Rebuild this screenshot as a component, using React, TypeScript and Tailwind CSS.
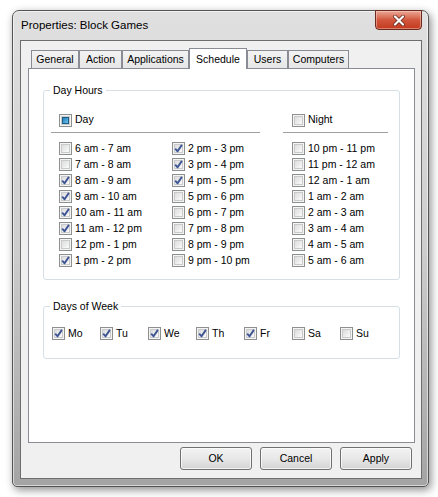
import React from "react";

type CheckState = "on" | "off" | "mixed";

function CheckBox({ state }: { state: CheckState }) {
  return (
    <span className="flex h-[13px] w-[13px] shrink-0 items-center justify-center border border-[#8e8f8f] bg-[#f4f4f4]">
      <span className="relative flex h-[9px] w-[9px] items-center justify-center border border-[#c9cacb] bg-gradient-to-br from-[#dcdcdd] to-[#fbfbfb]">
        {state === "on" && (
          <svg viewBox="0 0 11 11" className="absolute left-[-2px] top-[-2px] h-[11px] w-[11px]">
            <path d="M2.2 5.6 L4.6 8.3 L8.9 1.9" fill="none" stroke="#3d5593" strokeWidth="1.9" strokeLinejoin="round" />
          </svg>
        )}
        {state === "mixed" && (
          <span className="h-[7px] w-[7px] border border-[#1e5f8a] bg-gradient-to-br from-[#1f7fb8] to-[#6cc2ec]" />
        )}
      </span>
    </span>
  );
}

function Check({ label, state }: { label: string; state: CheckState }) {
  return (
    <div className="flex h-[16px] items-center gap-[3px] whitespace-nowrap">
      <CheckBox state={state} />
      <span className="leading-[13px]">{label}</span>
    </div>
  );
}

function Group({ title, className, children }: { title: string; className: string; children: React.ReactNode }) {
  return (
    <div className={`relative rounded-[3px] border border-[#d5dfe5] ${className}`}>
      <span className="absolute left-[6px] top-[-8px] bg-white px-[3px] leading-[14px]">{title}</span>
      {children}
    </div>
  );
}

const col1: [string, CheckState][] = [
  ["6 am - 7 am", "off"],
  ["7 am - 8 am", "off"],
  ["8 am - 9 am", "on"],
  ["9 am - 10 am", "on"],
  ["10 am - 11 am", "on"],
  ["11 am - 12 pm", "on"],
  ["12 pm - 1 pm", "off"],
  ["1 pm - 2 pm", "on"],
];

const col2: [string, CheckState][] = [
  ["2 pm - 3 pm", "on"],
  ["3 pm - 4 pm", "on"],
  ["4 pm - 5 pm", "on"],
  ["5 pm - 6 pm", "off"],
  ["6 pm - 7 pm", "off"],
  ["7 pm - 8 pm", "off"],
  ["8 pm - 9 pm", "off"],
  ["9 pm - 10 pm", "off"],
];

const night: string[] = [
  "10 pm - 11 pm",
  "11 pm - 12 am",
  "12 am - 1 am",
  "1 am - 2 am",
  "2 am - 3 am",
  "3 am - 4 am",
  "4 am - 5 am",
  "5 am - 6 am",
];

const days: [string, CheckState][] = [
  ["Mo", "on"],
  ["Tu", "on"],
  ["We", "on"],
  ["Th", "on"],
  ["Fr", "on"],
  ["Sa", "off"],
  ["Su", "off"],
];

const tabs: { name: string; w: string; active?: boolean }[] = [
  { name: "General", w: "w-[48px]" },
  { name: "Action", w: "w-[43px]" },
  { name: "Applications", w: "w-[67px]" },
  { name: "Schedule", w: "w-[58px]", active: true },
  { name: "Users", w: "w-[41px]" },
  { name: "Computers", w: "w-[61px]" },
];

function Button({ label }: { label: string }) {
  return (
    <button className="flex h-[23px] w-[72px] items-center justify-center rounded-[3px] border border-[#707070] bg-gradient-to-b from-[#f2f2f2] via-[#e8e8e8] to-[#d3d3d3] text-[10.5px] text-black shadow-[inset_0_0_0_1px_rgba(255,255,255,0.7)]">
      {label}
    </button>
  );
}

export default function App() {
  return (
    <div className="h-[497px] w-[438px] bg-white pl-[12px] pt-[10px] font-['Liberation_Sans',Arial,sans-serif] text-[10.5px] text-black">
      <div className="flex h-[477px] w-[417px] flex-col rounded-t-[7px] rounded-b-[5px] border border-[#555] bg-gradient-to-b from-[#e0e0e0] via-[#cdcdcd] to-[#a4a4a4] shadow-[inset_0_0_0_1px_rgba(255,255,255,0.55),2px_3px_9px_rgba(0,0,0,0.45)]">
        {/* title bar */}
        <div className="flex h-[29px] items-start justify-between pl-[8px] pr-[6px]">
          <span className="pt-[7px] text-[11.5px] leading-[14px]">Properties: Block Games</span>
          <div className="mt-[-1px] flex h-[20px] w-[47px] items-center justify-center rounded-b-[4px] border border-[#6b2a1e] bg-gradient-to-b from-[#e9a797] via-[#d2563c] to-[#c2391d] shadow-[inset_0_0_0_1px_rgba(255,220,210,0.45)]">
            <svg viewBox="0 0 14 11" className="h-[11px] w-[14px]">
              <path d="M3 1.5 L11 9.5 M11 1.5 L3 9.5" stroke="#5a2418" strokeWidth="3.6" strokeLinecap="round" />
              <path d="M3 1.5 L11 9.5 M11 1.5 L3 9.5" stroke="#ffffff" strokeWidth="2.2" strokeLinecap="round" />
            </svg>
          </div>
        </div>

        {/* client area */}
        <div className="ml-[7px] mr-[6px] flex h-[439px] flex-col border border-[#6e6e6e] bg-[#f0f0f0] pt-[7px]">
          <div className="ml-[7px] mr-[6px] flex flex-col">
            <div className="flex h-[20px] items-end pl-[3px]">
              {tabs.map((t) =>
                t.active ? (
                  <div
                    key={t.name}
                    className={`relative z-10 -mb-px flex h-[21px] ${t.w} items-start justify-center border border-b-0 border-[#898c95] bg-white pt-[3px]`}
                  >
                    {t.name}
                  </div>
                ) : (
                  <div
                    key={t.name}
                    className={`flex h-[18px] ${t.w} items-center justify-center border border-b-0 border-[#898c95] bg-gradient-to-b from-[#f3f3f3] to-[#e6e6e6] pt-[1px]`}
                  >
                    {t.name}
                  </div>
                )
              )}
            </div>

            {/* tab panel */}
            <div className="flex h-[375px] flex-col border border-[#898c95] bg-white px-[14px] pt-[21px]">
              <Group title="Day Hours" className="h-[190px]">
                <div className="flex pl-[7px]">
                  <div className="w-[209px]">
                    <div className="mt-[22px] flex h-[14px] items-center gap-[3px] pl-[8px]">
                      <CheckBox state="mixed" />
                      <span>Day</span>
                    </div>
                    <div className="mt-[5px] h-px bg-[#a0a0a0]" />
                    <div className="mt-[7px] flex pl-[8px]">
                      <div className="w-[113px]">
                        {col1.map(([l, s]) => (
                          <Check key={l} label={l} state={s} />
                        ))}
                      </div>
                      <div>
                        {col2.map(([l, s]) => (
                          <Check key={l} label={l} state={s} />
                        ))}
                      </div>
                    </div>
                  </div>
                  <div className="ml-[23px] w-[105px]">
                    <div className="mt-[22px] flex h-[14px] items-center gap-[3px] pl-[9px]">
                      <CheckBox state="off" />
                      <span>Night</span>
                    </div>
                    <div className="mt-[5px] h-px bg-[#a0a0a0]" />
                    <div className="mt-[7px] pl-[9px]">
                      {night.map((l) => (
                        <Check key={l} label={l} state="off" />
                      ))}
                    </div>
                  </div>
                </div>
              </Group>

              <Group title="Days of Week" className="mt-[26px] h-[53px]">
                <div className="flex pl-[8px] pt-[18px]">
                  {days.map(([l, s]) => (
                    <div key={l} className="w-[48px]">
                      <Check label={l} state={s} />
                    </div>
                  ))}
                </div>
              </Group>
            </div>
          </div>

          {/* buttons */}
          <div className="mr-[9px] mt-[4px] flex justify-end gap-[8px]">
            <Button label="OK" />
            <Button label="Cancel" />
            <Button label="Apply" />
          </div>
        </div>
      </div>
    </div>
  );
}
